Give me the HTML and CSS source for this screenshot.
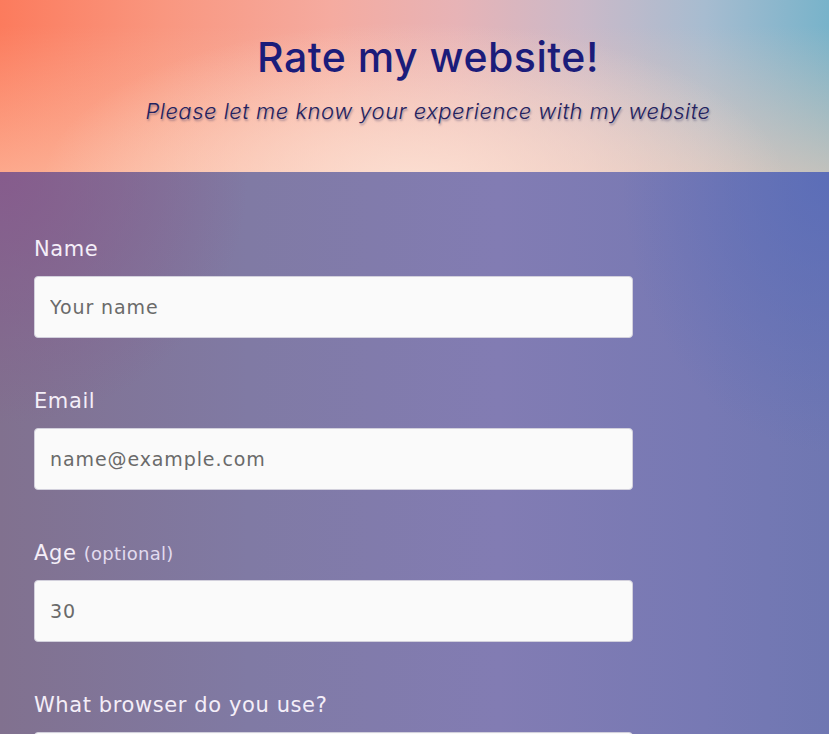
FILE: index.html
```html
<!DOCTYPE html>
<html lang="en">
<head>
<meta charset="utf-8">
<title>Rate my website!</title>
<link rel="stylesheet" href="styles.css">
</head>
<body>
<header class="hero">
  <h1 class="hero-title">Rate my website!</h1>
  <p class="hero-sub">Please let me know your experience with my website</p>
</header>
<main class="survey">
  <form class="survey-form">
    <div class="field">
      <label class="field-label" for="name">Name</label>
      <input class="field-input" id="name" type="text" placeholder="Your name">
    </div>
    <div class="field">
      <label class="field-label" for="email">Email</label>
      <input class="field-input" id="email" type="email" placeholder="name@example.com">
    </div>
    <div class="field">
      <label class="field-label" for="age">Age <span class="optional">(optional)</span></label>
      <input class="field-input" id="age" type="number" placeholder="30">
    </div>
    <div class="field">
      <label class="field-label" for="browser">What browser do you use?</label>
      <input class="field-input" id="browser" type="text">
    </div>
  </form>
</main>
</body>
</html>
```

FILE: styles.css
```css
html, body {
  margin: 0;
  padding: 0;
}
body {
  font-family: "DejaVu Sans", "Noto Sans", sans-serif;
  background: #7f78a8;
  height: 734px;
  overflow: hidden;
}
.hero {
  height: 172px;
  display: flex;
  flex-direction: column;
  align-items: center;
  box-sizing: border-box;
  padding: 32px 0 0 27px;
  background:
    radial-gradient(ellipse 45% 95% at 50% 108%, rgba(252, 226, 214, 0.9), rgba(252, 226, 214, 0) 100%),
    linear-gradient(180deg, rgba(255, 215, 190, 0) 15%, rgba(253, 205, 178, 0.55) 100%),
    linear-gradient(90deg, #fc7b5d 0%, #f99780 20%, #f5aba0 40%, #e7b3b6 55%, #cbb9c8 70%, #a7bcd0 85%, #78b3ca 100%);
}
.hero-title {
  margin: 0;
  font-family: Inter, "DejaVu Sans", sans-serif;
  font-size: 41px;
  font-weight: 500;
  line-height: 50px;
  letter-spacing: 0.5px;
  color: #1b1c7a;
}
.hero-sub {
  margin: 14px 0 0;
  font-family: Inter, "DejaVu Sans", sans-serif;
  font-size: 22px;
  font-weight: 300;
  font-style: italic;
  line-height: 30px;
  letter-spacing: 0.5px;
  color: #23225f;
  text-shadow: 1px 2px 2px rgba(40, 40, 90, 0.35);
}
.survey {
  height: 562px;
  box-sizing: border-box;
  padding: 62px 34px 0;
  background:
    radial-gradient(ellipse 25% 50% at 100% 0%, rgba(88, 108, 185, 0.85), rgba(88, 108, 185, 0) 100%),
    radial-gradient(ellipse 30% 45% at 0% 0%, rgba(135, 88, 140, 0.85), rgba(135, 88, 140, 0) 100%),
    linear-gradient(90deg, #81718f 0%, #807aa4 30%, #827cb3 60%, #7779b4 85%, #6f77b2 100%);
}
.survey-form {
  display: flex;
  flex-direction: column;
  gap: 48px;
}
.field {
  display: flex;
  flex-direction: column;
  gap: 12px;
}
.field-label {
  height: 30px;
  font-size: 21px;
  line-height: 30px;
  letter-spacing: 0.6px;
  color: #f4eef8;
}
.optional {
  font-size: 18px;
  line-height: 1;
  letter-spacing: 0.3px;
  color: #e2dbef;
}
.field-input {
  box-sizing: border-box;
  width: 599px;
  height: 62px;
  padding: 0 15px;
  border: 1px solid #d2d0dc;
  border-radius: 4px;
  background: #fafafa;
  font-family: inherit;
  font-size: 19px;
  letter-spacing: 0.9px;
  color: #555;
  outline: none;
}
.field-input::placeholder {
  color: #6a6a6a;
}
```
